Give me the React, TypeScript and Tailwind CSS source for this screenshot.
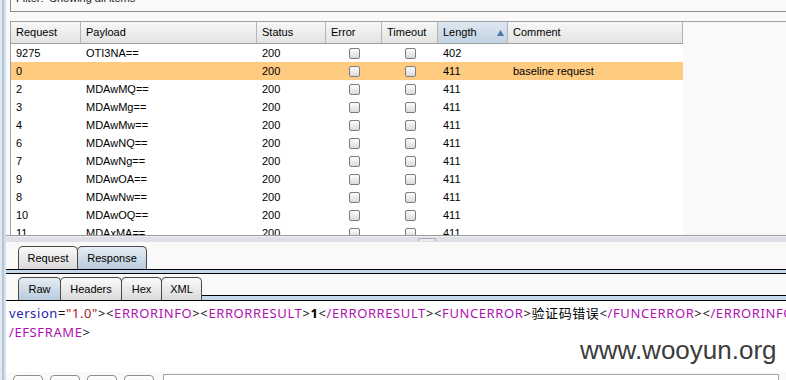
import React from "react";

type Row = { req: string; payload: string; len: string; comment?: string; hl?: boolean };

const rows: Row[] = [
  { req: "9275", payload: "OTI3NA==", len: "402" },
  { req: "0", payload: "", len: "411", comment: "baseline request", hl: true },
  { req: "2", payload: "MDAwMQ==", len: "411" },
  { req: "3", payload: "MDAwMg==", len: "411" },
  { req: "4", payload: "MDAwMw==", len: "411" },
  { req: "6", payload: "MDAwNQ==", len: "411" },
  { req: "7", payload: "MDAwNg==", len: "411" },
  { req: "9", payload: "MDAwOA==", len: "411" },
  { req: "8", payload: "MDAwNw==", len: "411" },
  { req: "10", payload: "MDAwOQ==", len: "411" },
  { req: "11", payload: "MDAxMA==", len: "411" },
];

const cols = "grid grid-cols-[70px_176px_69px_56px_56px_70px_175px]";

function Check() {
  return (
    <span className="block w-[11px] h-[11px] rounded-[2px] border border-[#7d7d7d] bg-linear-to-b from-[#fdfdfd] to-[#d9d9d9]" />
  );
}

function HeadCell({ children, blue }: { children?: React.ReactNode; blue?: boolean }) {
  return (
    <div
      className={
        "h-full border-r border-[#b4b4b4] pl-[5px] flex items-center " +
        (blue ? "bg-linear-to-b from-[#dde7f0] to-[#c2d3e3]" : "")
      }
    >
      {children}
    </div>
  );
}

const M = "text-[#b010b0]";
const K = "text-[#111]";

export default function App() {
  return (
    <div className="w-[786px] h-[380px] overflow-hidden bg-[#f9f9f9] flex relative font-['Liberation_Sans',Arial,sans-serif] text-[11px] text-black">
      {/* left window strip */}
      <div className="w-[6px] shrink-0 flex">
        <div className="w-[2px] bg-[#e2e8ef]" />
        <div className="w-[2px] bg-[#b3c5d8]" />
        <div className="w-[2px] bg-[#d6e1ec]" />
      </div>

      <div className="flex-1 min-w-0 flex flex-col">
        {/* filter box */}
        <div className="ml-[4px] h-[12px] border-l border-b border-[#8a8a8a] overflow-hidden shrink-0">
          <div className="-mt-[8px] pl-[5px] leading-[13px] text-[#222] whitespace-nowrap">Filter:&nbsp; Showing all items</div>
        </div>
        <div className="h-[9px] shrink-0" />

        {/* results table */}
        <div className="ml-[4px] h-[214px] shrink-0 border-l border-t border-[#a0a0a0] overflow-hidden">
          <div className={cols + " w-[672px] h-[22px] border-b border-[#a0a0a0] bg-linear-to-b from-[#f7f7f7] to-[#e3e3e3]"}>
            <HeadCell>Request</HeadCell>
            <HeadCell>Payload</HeadCell>
            <HeadCell>Status</HeadCell>
            <HeadCell>Error</HeadCell>
            <HeadCell>Timeout</HeadCell>
            <HeadCell blue>
              <div className="flex-1 flex items-center justify-between pr-[3px]">
                <span>Length</span>
                <svg width="7" height="6" viewBox="0 0 7 6">
                  <path d="M3.5 0 L7 6 L0 6 Z" fill="#4a78a8" />
                </svg>
              </div>
            </HeadCell>
            <HeadCell>Comment</HeadCell>
          </div>
          {rows.map((r) => (
            <div
              key={r.req}
              className={cols + " w-[672px] h-[18px] leading-[18px] " + (r.hl ? "bg-[#ffcb80]" : "bg-white")}
            >
              <div className="pl-[5px]">{r.req}</div>
              <div className="pl-[5px]">{r.payload}</div>
              <div className="pl-[5px]">200</div>
              <div className="flex items-center justify-center">
                <Check />
              </div>
              <div className="flex items-center justify-center">
                <Check />
              </div>
              <div className="pl-[5px]">{r.len}</div>
              <div className="pl-[5px]">{r.comment ?? ""}</div>
            </div>
          ))}
        </div>

        {/* splitter */}
        <div className="h-[7px] shrink-0 border-t border-[#9c9c9c] flex flex-col">
          <div className="h-[1px] bg-[#efefef]" />
          <div className="flex-1 bg-[#dfe0e7] flex items-start">
            <div className="ml-[412px] w-[18px] h-[3px] mt-[1px] rounded-t-[2px] border-t border-x border-[#a9a9b0] bg-[#e9e9ee]" />
          </div>
        </div>
        <div className="h-[4px] shrink-0" />

        {/* upper tabs */}
        <div className="h-[23px] shrink-0 flex items-end pl-[12px]">
          <div className="w-[60px] h-[23px] rounded-t-[5px] border-t border-x border-[#4a4a4a] bg-linear-to-b from-[#fafafa] to-[#d9d9d9] flex items-center justify-center">
            Request
          </div>
          <div className="-ml-px w-[70px] h-[23px] rounded-t-[5px] border-t border-x border-[#4a4a4a] bg-linear-to-b from-[#e6edf4] to-[#b8cbdd] flex items-center justify-center">
            Response
          </div>
        </div>
        <div className="h-[5px] shrink-0 border-y border-black bg-[#c3d7ea]" />
        <div className="h-[3px] shrink-0" />

        {/* lower tabs */}
        <div className="h-[24px] shrink-0 flex items-end border-b border-black">
          <div className="w-[12px] h-full" />
          <div className="w-[43px] h-[23px] rounded-t-[5px] border-t border-x border-[#4a4a4a] bg-linear-to-b from-[#e6edf4] to-[#b8cbdd] flex items-center justify-center">
            Raw
          </div>
          <div className="-ml-px w-[62px] h-[23px] rounded-t-[5px] border-t border-x border-[#4a4a4a] bg-linear-to-b from-[#fafafa] to-[#d9d9d9] flex items-center justify-center">
            Headers
          </div>
          <div className="-ml-px w-[41px] h-[23px] rounded-t-[5px] border-t border-x border-[#4a4a4a] bg-linear-to-b from-[#fafafa] to-[#d9d9d9] flex items-center justify-center">
            Hex
          </div>
          <div className="-ml-px w-[41px] h-[23px] rounded-t-[5px] border-t border-x border-[#4a4a4a] bg-linear-to-b from-[#fafafa] to-[#d9d9d9] flex items-center justify-center">
            XML
          </div>
          <div className="flex-1 h-[5px] border-t border-black bg-[#c3d7ea]" />
        </div>

        {/* editor */}
        <div className="h-[71px] shrink-0 bg-white pt-[3px] pl-[3px] overflow-hidden whitespace-nowrap font-['Noto_Sans','Noto_Sans_CJK_SC',sans-serif] text-[13px] leading-[19px] tracking-[0.6px]">
          <div>
            <span className="text-[#2424b0]">version</span>
            <span className={K}>=</span>
            <span className="text-[#a51c1c]">"1.0"</span>
            <span className={K}>&gt;&lt;</span>
            <span className={M}>ERRORINFO</span>
            <span className={K}>&gt;&lt;</span>
            <span className={M}>ERRORRESULT</span>
            <span className={K}>&gt;</span>
            <span className="font-bold text-black">1</span>
            <span className={K}>&lt;</span>
            <span className={M}>/ERRORRESULT</span>
            <span className={K}>&gt;&lt;</span>
            <span className={M}>FUNCERROR</span>
            <span className={K}>&gt;</span>
            <span className="text-black">验证码错误</span>
            <span className={K}>&lt;</span>
            <span className={M}>/FUNCERROR</span>
            <span className={K}>&gt;&lt;</span>
            <span className={M}>/ERRORINFO</span>
            <span className={K}>&gt;&lt;</span>
          </div>
          <div>
            <span className={M}>/EFSFRAME</span>
            <span className={K}>&gt;</span>
          </div>
        </div>

        {/* bottom bar */}
        <div className="h-[30px] shrink-0 flex items-start pt-[2px] pl-[7px]">
          <div className="mt-[1px] w-[30px] h-[22px] rounded-[4px] border border-[#8f8f8f] bg-linear-to-b from-white to-[#dedede]" />
          <div className="mt-[1px] ml-[7px] w-[30px] h-[22px] rounded-[4px] border border-[#8f8f8f] bg-linear-to-b from-white to-[#dedede]" />
          <div className="mt-[1px] ml-[7px] w-[30px] h-[22px] rounded-[4px] border border-[#8f8f8f] bg-linear-to-b from-white to-[#dedede]" />
          <div className="mt-[1px] ml-[7px] w-[30px] h-[22px] rounded-[4px] border border-[#8f8f8f] bg-linear-to-b from-white to-[#dedede]" />
          <div className="ml-[9px] w-[616px] h-[22px] border border-[#a6a6a6] bg-white" />
        </div>
      </div>

      {/* watermark */}
      <div className="absolute left-[580px] top-[337px] text-[26px] leading-[26px] text-[#3c3c3c] font-['Liberation_Sans',Arial,sans-serif] pointer-events-none">
        www.wooyun.org
      </div>
    </div>
  );
}
